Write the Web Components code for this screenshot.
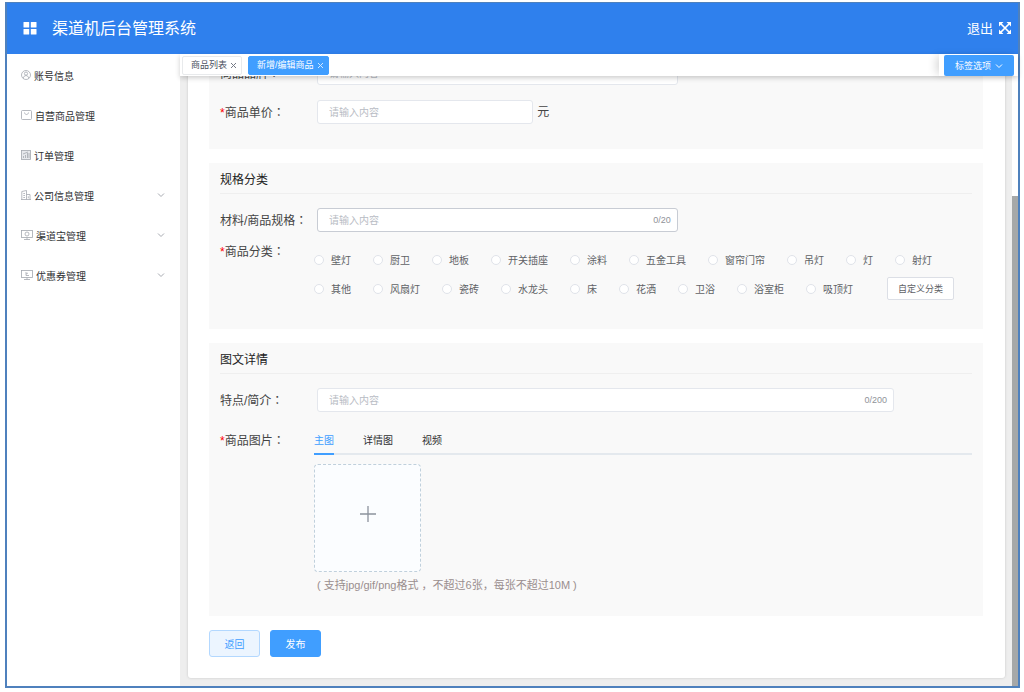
<!DOCTYPE html>
<html lang="zh-CN">
<head>
<meta charset="utf-8">
<meta name="viewport" content="width=device-width, initial-scale=1">
<title>渠道机后台管理系统</title>
<style>
  html, body { height: 100%; }
  body {
    margin: 0; box-sizing: border-box; padding: 2px 4px 4px 5px; background: #fff;
    font-family: "Liberation Sans", "Noto Sans CJK SC", sans-serif; font-size: 12px; color: #444;
    --brand: #2f80ed; --primary: #409eff; --line: #dcdfe6; --muted: #909399;
    --colon-font: "Noto Sans CJK TC", sans-serif;
  }
</style>
</head>
<body>
<admin-app>
  <app-header slot="header" heading="渠道机后台管理系统"></app-header>
  <side-nav slot="nav">
    <nav-item icon="user">账号信息</nav-item>
    <nav-item icon="bag">自营商品管理</nav-item>
    <nav-item icon="chart">订单管理</nav-item>
    <nav-item icon="building" expandable>公司信息管理</nav-item>
    <nav-item icon="screen" expandable>渠道宝管理</nav-item>
    <nav-item icon="coupon" expandable>优惠券管理</nav-item>
  </side-nav>
  <tab-strip slot="tabs">
    <page-tab>商品列表</page-tab>
    <page-tab active>新增/编辑商品</page-tab>
  </tab-strip>
  <form-panel compact>
    <text-field label="商品品牌" count="0/20" size="medium"></text-field>
    <text-field label="商品单价" required unit="元" size="small"></text-field>
  </form-panel>
  <form-panel heading="规格分类">
    <text-field label="材料/商品规格" count="0/20" size="medium" strong></text-field>
    <category-field label="商品分类"
      options="壁灯,厨卫,地板,开关插座,涂料,五金工具,窗帘门帘,吊灯,灯,射灯,其他,风扇灯,瓷砖,水龙头,床,花洒,卫浴,浴室柜,吸顶灯"></category-field>
  </form-panel>
  <form-panel heading="图文详情">
    <text-field label="特点/简介" count="0/200" size="large"></text-field>
    <media-field label="商品图片"></media-field>
  </form-panel>
  <form-actions></form-actions>
</admin-app>

<script>
const BASE = `*,*::before,*::after{box-sizing:border-box}
  button,input{font-family:inherit;margin:0}
  button{cursor:pointer}
  a{color:inherit;text-decoration:none}
  svg{display:block;flex:none}`;

const ROW = `:host{display:block}
  .row{display:flex;align-items:flex-start}
  .label{flex:none;width:94px;line-height:24px;font-size:12px;color:#444;white-space:nowrap}
  .star{color:#f00}
  .colon{font-family:var(--colon-font)}
  .control{flex:1;min-width:0}`;

const CHEVRON = `<svg width="8" height="8" viewBox="0 0 8 8" fill="none" stroke="currentColor" aria-hidden="true"><path d="M1 2.5l3 3 3-3"/></svg>`;

const ICONS = {
  user: [10, `<circle cx="5" cy="6" r="4.5"/><circle cx="5" cy="4.6" r="1.6"/><path d="M2.3 9.3c.2-3.6 5.200-3.600 5.400 0"/>`],
  bag: [11, `<rect x=".5" y="1.500" width="10" height="9" rx="1"/><path d="M3.500 3.500c.3 2.700 3.700 2.700 4 0"/>`],
  chart: [10, `<rect x=".5" y="1.500" width="9" height="9" fill="#e6e8ec"/><path d="M2.500 9V7M4.500 9V6M6.500 9V4M8 9V4M2 5l5-2"/>`],
  building: [10, `<path d="M.8 10.500V2.500l4.700-1v9M5.500 5.500h3.500v5M0 10.500h10M2.300 4.500h1.700M2.300 6.500h1.700M2.300 8.500h1.700M7.300 7.300v2"/>`],
  screen: [12, `<rect x=".5" y="1.500" width="11" height="7"/><circle cx="6" cy="5" r="2"/><path d="M6 8.500v2M3 10.500h6"/>`],
  coupon: [12, `<rect x=".5" y="1.500" width="11" height="7"/><path d="M5 3v3.500h3M5 5l2-1M6 8.500v2M3 10.500h6"/>`]
};

function define(name, render) {
  customElements.define(name, class extends HTMLElement {
    connectedCallback() {
      if (this.shadowRoot) return;
      const t = document.createElement('template');
      t.innerHTML = render(this);
      this.attachShadow({ mode: 'open' }).append(t.content.cloneNode(true));
    }
  });
}
const star = on => on ? '<span class="star">*</span>' : '';
const colon = '<span class="colon" lang="zh-Hant-TW">：</span>';

define('admin-app', () => `<style>${BASE}
  :host{display:flex;flex-direction:column;box-sizing:border-box;height:100%;border:2px solid #4f81bd;border-top-width:1px;background:#fff}
  .body{flex:1;min-height:0;display:flex}
  .main{flex:1;min-width:0;display:flex;flex-direction:column}
  .stage{flex:1;min-height:0;display:flex}
  .scroll{flex:1;min-width:0;overflow:hidden;display:flex;flex-direction:column;justify-content:flex-end;background:#eee;padding:0 7px 8px 8px}
  .card{flex:1 0 auto;display:flex;flex-direction:column;gap:14px;padding:0 22px 21px 21px;background:#fff;border-radius:0 0 3px 3px;box-shadow:0 0 3px rgba(0,0,0,.16)}
  .track{width:6px;display:flex;flex-direction:column;justify-content:flex-end;background:#fff}
  .thumb{height:80.4%;background:#a6a8a8}
  </style>
  <slot name="header"></slot>
  <div class="body"><slot name="nav"></slot>
    <div class="main"><slot name="tabs"></slot>
      <div class="stage">
        <main class="scroll"><div class="card"><slot></slot></div></main>
        <div class="track"><div class="thumb"></div></div>
      </div>
    </div>
  </div>`);

define('app-header', el => `<style>${BASE}
  :host{display:block}
  header{display:flex;align-items:center;height:51px;padding:0 7px 0 16px;background:var(--brand);color:#fff}
  h1{margin:0 auto 0 15px;font-size:16px;line-height:24px;font-weight:400}
  a{font-size:13px;line-height:24px;margin-right:6px}
  button{display:flex;padding:0;border:0;background:none;color:inherit}
  </style>
  <header>
    <svg width="14" height="14" viewBox="0 0 14 14" fill="#fff" aria-hidden="true"><rect x=".5" y="0" width="5.700" height="5.500" rx=".5"/><rect x="7.800" y="0" width="5.700" height="5.500" rx=".5"/><rect x=".5" y="7" width="5.700" height="5.500" rx=".5"/><rect x="7.800" y="7" width="5.700" height="5.500" rx=".5"/></svg>
    <h1>${el.getAttribute('heading')}</h1>
    <a href="#logout">退出</a>
    <button type="button" aria-label="全屏"><svg width="12" height="14" viewBox="0 0 12 14" fill="#fff" stroke="#fff"><path d="M2 2l8 8M10 2l-8 8" stroke-width="1.700"/><path stroke="none" d="M0 0h4.500L0 4.500zM12 0v4.500L7.500 0zM0 12V7.500L4.500 12zM12 12H7.500L12 7.500z"/></svg></button>
  </header>`);

define('side-nav', () => `<style>${BASE}
  :host{display:block;flex:none;width:173px;background:#fff}
  nav{padding-top:1px}
  </style><nav><slot></slot></nav>`);

define('nav-item', el => {
  const [w, shape] = ICONS[el.getAttribute('icon')];
  return `<style>${BASE}
  :host{display:block}
  a{display:flex;align-items:center;gap:3px;height:40px;padding:0 15px 0 14px;font-size:10px;color:#303133}
  .text{flex:1}
  .icon{color:#a4a8b0}
  .arrow{color:#a8abb2}
  </style>
  <a href="#${el.getAttribute('icon')}">
    <svg class="icon" width="${w}" height="12" viewBox="0 0 ${w} 12" fill="none" stroke="currentColor" stroke-width=".8" aria-hidden="true">${shape}</svg>
    <span class="text"><slot></slot></span>
    ${el.hasAttribute('expandable') ? `<span class="arrow">${CHEVRON}</span>` : ''}
  </a>`;
});

define('tab-strip', () => `<style>${BASE}
  :host{display:block;position:relative;z-index:1}
  .bar{display:flex;align-items:stretch;height:22px;background:#fff;box-shadow:0 2px 5px rgba(0,0,0,.2)}
  .tabs{flex:1;display:flex;align-items:center;gap:6px;padding-left:2px}
  .more{display:flex;padding:1px 4px 0 5px;background:#fff;box-shadow:-5px 0 8px -2px rgba(0,0,0,.15)}
  button{display:flex;align-items:center;gap:4px;padding:0 11px;border:0;border-radius:2px;background:var(--primary);color:#fff;font-size:9px}
  </style>
  <div class="bar"><div class="tabs"><slot></slot></div>
  <div class="more"><button type="button">标签选项${CHEVRON}</button></div></div>`);

define('page-tab', el => `<style>${BASE}
  :host{display:block}
  button{display:flex;align-items:center;gap:3px;height:19px;padding:0 4px 0 8px;border:1px solid #e8eaec;border-radius:2px;background:#fff;color:#495060;font-size:9px;line-height:10px;white-space:nowrap}
  button.active{border-color:var(--primary);background:var(--primary);color:#fff}
  svg{opacity:.75}
  </style>
  <button type="button" class="${el.hasAttribute('active') ? 'active' : ''}"><span><slot></slot></span>
  <svg width="7" height="7" viewBox="0 0 7 7" stroke="currentColor" aria-hidden="true"><path d="M1 1l5 5M6 1L1 6"/></svg></button>`);

define('form-panel', el => `<style>${BASE}
  :host{display:block}
  section{background:#f9f9f9;padding:0 11px 19px}
  :host([compact]) section{padding-bottom:10px}
  h2{margin:0 0 14px;padding-top:3px;height:31px;line-height:28px;border-bottom:1px solid #efefef;font-size:12px;font-weight:400;color:#222}
  </style>
  <section>${el.hasAttribute('heading') ? `<h2>${el.getAttribute('heading')}</h2>` : ''}<slot></slot></section>`);

define('text-field', el => `<style>${BASE}${ROW}
  .row{margin-bottom:14px}
  .control{display:flex;align-items:center;gap:4px;padding-left:3px}
  .box{display:flex;align-items:center;height:24px;padding:0 6px 0 11px;background:#fff;border:1px solid var(--box-line,#e4e7ed);border-radius:3px}
  .strong{--box-line:#c8ccd4}
  .small{width:33%}.medium{width:55.1%}.large{width:88.1%}
  input{flex:1;min-width:0;height:22px;padding:0;border:0;outline:0;background:none;font-size:10px;color:#606266}
  input::placeholder{color:#b8bcc4;opacity:1}
  .count{font-size:9px;color:var(--muted)}
  .unit{line-height:24px}
  </style>
  <div class="row">
    <label class="label" for="field">${star(el.hasAttribute('required'))}${el.getAttribute('label')}${colon}</label>
    <div class="control">
      <div class="box ${el.getAttribute('size')} ${el.hasAttribute('strong') ? 'strong' : ''}">
        <input id="field" type="text" placeholder="请输入内容">
        ${el.hasAttribute('count') ? `<span class="count">${el.getAttribute('count')}</span>` : ''}
      </div>
      ${el.hasAttribute('unit') ? `<span class="unit">${el.getAttribute('unit')}</span>` : ''}
    </div>
  </div>`);

define('category-field', el => `<style>${BASE}${ROW}
  :host{margin-top:-8px;padding-bottom:10px}
  .control{display:flex;flex-wrap:wrap;gap:6px 22px;padding-top:9px}
  .option{display:flex;align-items:center;gap:7px;height:23px;font-size:10px;color:#606266;white-space:nowrap}
  input{appearance:none;width:10px;height:10px;border:1px solid #e0e3ea;border-radius:50%;background:#fff}
  input:checked{border:3px solid var(--primary)}
  button{height:23px;margin-left:12px;padding:0 10px;border:1px solid var(--line);border-radius:2px;background:#fff;color:#606266;font-size:9px}
  </style>
  <div class="row" role="radiogroup" aria-labelledby="name">
    <span class="label" id="name">${star(true)}${el.getAttribute('label')}${colon}</span>
    <div class="control">
      ${el.getAttribute('options').split(',').map(o => `<label class="option"><input type="radio" name="category" value="${o}"><span>${o}</span></label>`).join('')}
      <button type="button">自定义分类</button>
    </div>
  </div>`);

define('media-field', el => `<style>${BASE}${ROW}
  :host{padding-top:1px}
  .tabs{display:flex;gap:29px;border-bottom:2px solid #e4e9ee}
  .tabs button{height:27px;margin-bottom:-2px;padding:0 0 2px;border:0;border-bottom:2px solid transparent;background:none;font-size:10px;color:#303133}
  .tabs button.active{color:var(--primary);border-color:var(--primary)}
  .upload{display:flex;align-items:center;justify-content:center;width:107px;height:108px;margin-top:9px;padding-bottom:8px;border:1px dashed #c0d0dc;border-radius:4px;background:#fbfdff;cursor:pointer}
  .upload input{position:absolute;width:1px;height:1px;opacity:0}
  p{margin:1px 0 0;padding-left:3px;line-height:24px;font-size:11px;color:#998e8e}
  </style>
  <div class="row">
    <span class="label">${star(true)}${el.getAttribute('label')}${colon}</span>
    <div class="control">
      <div class="tabs" role="tablist">
        <button type="button" role="tab" class="active" aria-selected="true">主图</button>
        <button type="button" role="tab">详情图</button>
        <button type="button" role="tab">视频</button>
      </div>
      <label class="upload"><input type="file" accept="image/*" aria-label="上传图片">
        <svg width="18" height="18" viewBox="0 0 18 18" stroke="#8c939d" stroke-width="1.300" aria-hidden="true"><path d="M9 1v16M1 9h16"/></svg>
      </label>
      <p>( 支持jpg/gif/png格式 ，不超过6张，每张不超过10M )</p>
    </div>
  </div>`);

define('form-actions', () => `<style>${BASE}
  :host{display:flex;gap:10px}
  button{width:51px;height:27px;padding:0;border:1px solid #b3d8ff;border-radius:3px;background:#ecf5ff;color:var(--primary);font-size:10px}
  .primary{border-color:var(--primary);background:var(--primary);color:#fff}
  </style>
  <button type="button">返回</button><button type="submit" class="primary">发布</button>`);
</script>
</body>
</html>
